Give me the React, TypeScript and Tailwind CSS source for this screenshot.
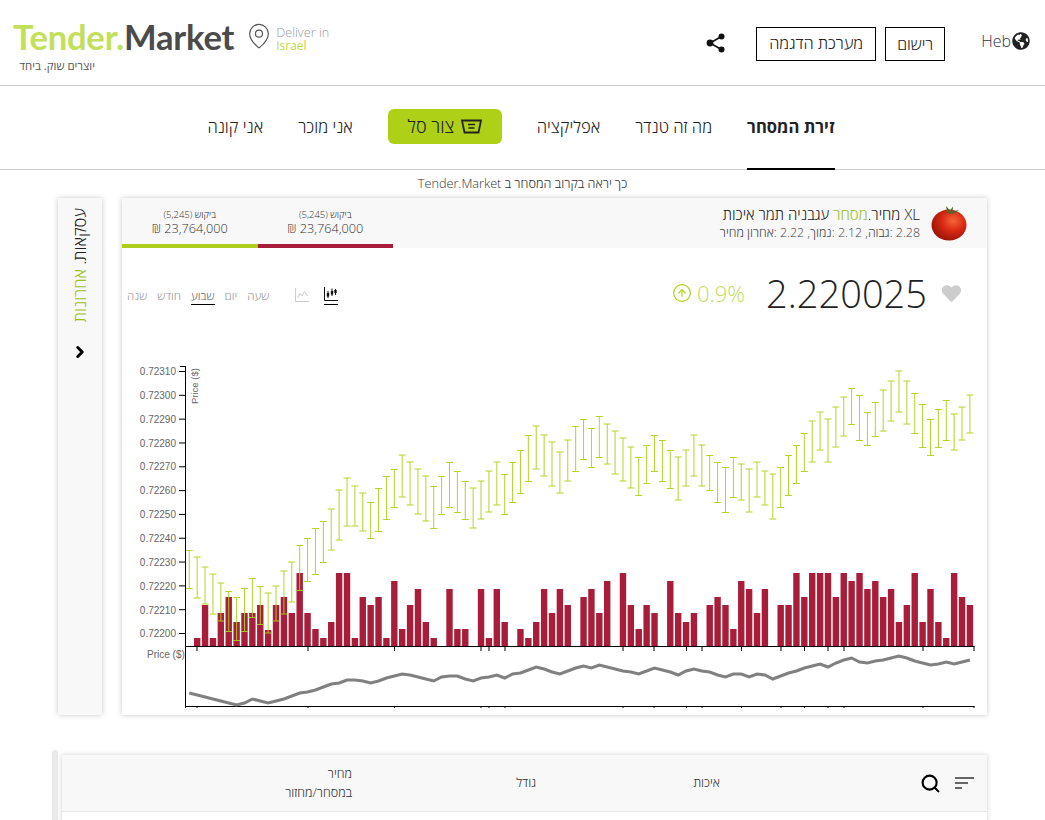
import { ChevronRight, CircleArrowUp, MapPin, Search } from "lucide-react";
import { FaGlobeAmericas, FaHeart } from "react-icons/fa";

const tops = [550,557,567,574,583,591,597,588,578,586,593,586,571,562,545,538,528,521,509,490,478,486,493,502,488,476,469,455,462,469,476,486,476,462,471,481,488,481,471,462,474,462,450,435,426,435,442,452,440,426,419,428,416,424,431,438,447,457,445,435,440,450,457,450,435,445,455,462,467,457,464,469,462,471,474,467,455,445,433,421,412,419,407,397,388,395,412,402,390,381,371,381,393,404,419,409,400,414,407,395];
const bottoms = [588,598,604,614,621,631,640,631,617,624,633,621,614,602,590,581,574,562,550,540,526,526,531,538,531,519,507,497,505,514,521,528,514,507,512,519,528,519,512,505,514,502,493,481,469,476,486,493,481,471,459,467,457,464,474,481,488,495,483,471,481,488,500,486,476,486,490,502,512,497,500,512,497,505,519,507,495,483,471,462,450,462,447,436,424,440,445,436,431,421,412,424,433,447,455,447,440,450,440,433];
const volumes = [0,638,605,638,613,597,622,613,613,605,630,605,597,613,573,613,629,638,622,573,573,638,597,605,597,638,581,629,605,589,622,638,0,589,629,629,0,589,638,589,622,0,629,638,622,589,613,589,605,0,597,589,613,581,0,573,605,629,605,613,0,581,613,622,613,0,605,597,605,629,581,589,613,589,0,605,605,573,597,573,573,573,597,573,581,573,589,581,597,589,622,605,573,622,589,622,638,573,597,605];
const line = [693,695,697,699,701,703,705,703,699,701,703,701,699,696,693,692,690,687,684,683,680,680,681,683,681,678,676,674,675,677,679,681,677,676,676,679,681,678,677,675,678,674,673,670,667,669,672,674,671,668,666,668,665,667,669,671,672,674,671,668,670,672,675,671,669,671,672,675,677,674,674,677,674,675,679,676,673,671,668,666,664,667,663,660,658,662,663,661,660,658,656,658,661,663,665,664,662,664,662,660];
const priceLabels = ["0.72310","0.72300","0.72290","0.72280","0.72270","0.72260","0.72250","0.72240","0.72230","0.72220","0.72210","0.72200"];
const xTicks = [197,308,394.5,481,489,505,623,654,686.5,702,741.5,781,804.5,828,844,923,974];

const barX = (i: number) => 189.3 + i * 7.885;

function Tomato() {
  return (
    <svg width="36" height="36" viewBox="0 0 36 36">
      <defs>
        <radialGradient id="tomatoSkin" cx="0.62" cy="0.36" r="0.72">
          <stop offset="0" stopColor="#f4663a" />
          <stop offset="0.45" stopColor="#d92a13" />
          <stop offset="1" stopColor="#8f1206" />
        </radialGradient>
      </defs>
      <ellipse cx="18" cy="20" rx="17.5" ry="15.5" fill="url(#tomatoSkin)" />
      <path d="M18 8 L12 3 L16 6.5 L15 1 L19 5.5 L22 1.5 L21.5 6.5 L28 5 L22 9 L17 8 L11 11 Z" fill="#4c6b2a" />
    </svg>
  );
}

function PriceChart() {
  return (
    <svg className="block" width="865" height="377" viewBox="122 338 865 377">
      {volumes.map((top, i) =>
        top ? <rect key={i} x={barX(i) - 3.2} y={top} width="6.4" height={646 - top} fill="#a81e3a" /> : null
      )}
      {tops.map((top, i) => {
        const x = barX(i);
        const crisp = Math.abs((x % 1) - 0.5) < 0.25;
        const off = crisp ? 0.5 : 0;
        return (
          <g key={i} stroke="#aed117" strokeWidth="1" opacity="0.92">
            <line x1={x} x2={x} y1={top + off} y2={bottoms[i] + off} />
            <line x1={x - 3.5} x2={x + 3.5} y1={top + off} y2={top + off} />
            <line x1={x - 3.5} x2={x + 3.5} y1={bottoms[i] + off} y2={bottoms[i] + off} />
          </g>
        );
      })}

      <g stroke="#000" strokeWidth="1">
        <line x1="185.5" x2="185.5" y1="366" y2="707" />
        <line x1="185" x2="974.5" y1="646.5" y2="646.5" />
        <line x1="185" x2="974.5" y1="706.5" y2="706.5" />
        {xTicks.map((x) => (
          <g key={x}>
            <line x1={x} x2={x} y1="646" y2="651" />
            <line x1={x} x2={x} y1="706" y2="708" />
          </g>
        ))}
        <line x1="185.5" x2="185.5" y1="706" y2="708" />
        <line x1="180" x2="185" y1="366.5" y2="366.5" />
        {priceLabels.map((_, i) => (
          <line key={i} x1="179" x2="185" y1={371.5 + i * 23.82} y2={371.5 + i * 23.82} />
        ))}
      </g>

      <g fill="#666" fontSize="10" fontFamily="'Liberation Sans', sans-serif">
        {priceLabels.map((label, i) => (
          <text key={label} x="176" y={375 + i * 23.85} textAnchor="end">{label}</text>
        ))}
        <text x="147" y="658">Price ($)</text>
        <text transform="translate(198 404) rotate(-90)" fontSize="9.5">Price ($)</text>
      </g>

      <polyline
        points={line.map((y, i) => `${barX(i)},${y}`).join(" ")}
        fill="none"
        stroke="#808080"
        strokeWidth="3"
      />
    </svg>
  );
}

function BookColumn({ color }: { color: string }) {
  return (
    <div className="flex h-[50px] w-[135.5px] flex-col">
      <div dir="rtl" className="flex flex-1 flex-col items-center justify-center pt-[1px] text-[#333]">
        <span className="text-[9.5px] leading-[12px]">ביקוש (5,245)</span>
        <span className="text-[12.7px] leading-[14px]">23,764,000 ₪</span>
      </div>
      <div className={`h-[4px] ${color}`} />
    </div>
  );
}

export default function App() {
  return (
    <div className="h-[820px] overflow-hidden bg-white font-['Open_Sans',sans-serif] font-light text-[#222]">
      {/* top bar */}
      <header className="flex h-[86px] items-center border-b border-[#ccc] pl-[13px] pr-[15px]">
        <div className="flex flex-col pt-[2px]">
          <div className="font-['Lato',sans-serif] text-[34.6px] font-bold leading-[44px] tracking-[-0.2px]">
            <span className="text-[#c3e05c]">Tender.</span>
            <span className="text-[#4b4b4b]">Market</span>
          </div>
          <div dir="rtl" className="w-[82px] text-[11.4px] font-normal leading-[14px] text-[#555]">
            יוצרים שוק. ביחד
          </div>
        </div>
        <MapPin size={28} strokeWidth={1} className="ml-[11px] mb-[14px] text-[#555]" />
        <div className="ml-[3px] mb-[7px] flex flex-col leading-[14px]">
          <span className="text-[12.7px] text-[#999]">Deliver in</span>
          <span className="text-[12px] font-normal text-[#bcd93a]">Israel</span>
        </div>

        <svg className="ml-auto" width="20" height="20" viewBox="0 0 20 20">
          <g stroke="#111" strokeWidth="1.6">
            <line x1="4" y1="10" x2="15.5" y2="3.5" />
            <line x1="4" y1="10" x2="15.5" y2="16.5" />
          </g>
          <circle cx="4" cy="10" r="3.4" fill="#111" />
          <circle cx="15.5" cy="3.5" r="3" fill="#111" />
          <circle cx="15.5" cy="16.5" r="3" fill="#111" />
        </svg>
        <button dir="rtl" className="ml-[30px] mt-[2px] h-[34px] w-[120px] border border-black text-[16.4px] font-light">
          מערכת הדגמה
        </button>
        <button dir="rtl" className="ml-[9px] mt-[2px] h-[34px] w-[60px] border border-black text-[16px] font-light">
          רישום
        </button>
        <div className="ml-[36px] mb-[3px] flex items-center gap-[1px]">
          <span className="text-[16px] text-[#334]">Heb</span>
          <FaGlobeAmericas size={18} className="text-[#222]" />
        </div>
      </header>

      {/* main nav */}
      <nav dir="rtl" className="flex h-[84px] justify-center gap-[35px] border-b border-[#ccc] pr-[3px] text-[16.6px]">
        <a className="-mb-px flex items-center border-b-2 border-black font-bold text-[#222]">זירת המסחר</a>
        <a className="flex items-center">מה זה טנדר</a>
        <a className="flex items-center">אפליקציה</a>
        <div className="flex items-center">
          <button className="mb-[2px] flex h-[35px] w-[114px] items-center justify-center gap-[7px] rounded-[6px] bg-[#aed117] text-[18px] font-light text-[#222]">
            <svg width="21" height="15" viewBox="0 0 21 15" fill="none" stroke="#222">
              <path d="M1 1.5 H20 L17.5 13.5 H3.5 Z" strokeWidth="1.8" />
              <path d="M7 5.5 H14 M7.5 9 H13.5" strokeWidth="1.4" />
            </svg>
            צור סל
          </button>
        </div>
        <a className="flex items-center">אני מוכר</a>
        <a className="flex items-center">אני קונה</a>
      </nav>

      <p dir="rtl" className="flex h-[28px] items-center justify-center text-[12.7px] text-[#333]">
        כך יראה בקרוב המסחר ב Tender.Market
      </p>

      {/* chart row */}
      <section className="ml-[58px] flex gap-[20px]">
        <aside className="flex h-[517px] w-[44px] flex-col items-center bg-[#f8f8f8] pt-[10px] shadow-[0_0_5px_rgba(0,0,0,0.22)]">
          <div dir="rtl" className="rotate-180 text-[16.6px] leading-[44px] [writing-mode:vertical-rl]">
            עסקאות. <span className="text-[#9dbe1d]">אחרונות</span>
          </div>
          <ChevronRight size={18} strokeWidth={4} className="mt-[21px] text-black" />
        </aside>

        <div className="h-[517px] w-[865px] bg-white shadow-[0_0_5px_rgba(0,0,0,0.22)]">
          <div className="flex h-[50px] bg-[#f8f8f8]">
            <BookColumn color="bg-[#aecd1c]" />
            <BookColumn color="bg-[#a81e3a]" />
            <div dir="rtl" className="ml-auto flex items-center gap-[11px] pr-[20px]">
              <Tomato />
              <div className="flex flex-col items-start">
                <span className="text-[15px] leading-[20px]">
                  XL מחיר.<span className="text-[#9dbe1d]">מסחר</span> עגבניה תמר איכות
                </span>
                <span className="text-[12.4px] leading-[18px] text-[#444]">
                  2.28 :גבוה, 2.12 :נמוך, 2.22 :אחרון מחיר
                </span>
              </div>
            </div>
          </div>

          <div className="flex h-[90px] items-center pl-[5px] pr-[26px]">
            <div dir="rtl" className="mt-[5px] flex items-start gap-[10px] text-[11.7px] leading-[18px] text-[#999]">
              <span className="border-b border-transparent">שעה</span>
              <span className="border-b border-transparent">יום</span>
              <span className="border-b border-black text-[#666]">שבוע</span>
              <span className="border-b border-transparent">חודש</span>
              <span className="border-b border-transparent">שנה</span>
            </div>
            <svg className="ml-[26px] mt-[3px]" width="14" height="14" viewBox="0 0 14 14" fill="none" stroke="#ccc">
              <path d="M0.5 0 V13.5 H14" />
              <path d="M2.5 10 L5 5.5 L7 8 L9.5 3.5 L12.5 8" />
            </svg>
            <div className="ml-[15px] mt-[6px] border-b border-black pb-[3px]">
              <svg className="block" width="14" height="14" viewBox="0 0 14 14" fill="none" stroke="#111">
                <path d="M0.5 0 V13.5 H14" />
                <path d="M4 4 V11 M8 1.5 V9 M11.5 2 V8" strokeWidth="1" />
                <path d="M4 6 V9.5 M8 4 V7.5 M11.5 3 V6" strokeWidth="2.4" />
              </svg>
            </div>

            <CircleArrowUp size={20} strokeWidth={1.4} className="ml-auto text-[#aed117]" />
            <span className="ml-[5px] text-[22px] text-[#c3dd5b]">0.9%</span>
            <span className="ml-[21px] text-[38px] leading-none text-[#222]">2.220025</span>
            <FaHeart size={19} className="ml-[15px] text-[#ccc]" />
          </div>

          <PriceChart />
        </div>
      </section>

      {/* listings table */}
      <section className="mt-[35px] flex pl-[52px]">
        <div className="h-[85px] w-[6px] rounded-t-[4px] bg-[#e9e9e9]" />
        <div className="ml-[4px] mt-[5px] h-[100px] w-[925px] bg-white shadow-[0_0_5px_rgba(0,0,0,0.2)]">
          <div className="flex h-[57px] items-center border-b border-[#e5e5e5] bg-[#f8f8f8] pr-[13px] text-[12.5px] text-[#333]">
            <div dir="rtl" className="w-[290px] leading-[19px]">
              <div>מחיר</div>
              <div>במסחר/מחזור</div>
            </div>
            <div dir="rtl" className="w-[184px]">גודל</div>
            <div dir="rtl" className="w-[184px]">איכות</div>
            <Search size={21} strokeWidth={2.4} className="ml-auto text-black" />
            <svg className="ml-[14px]" width="19" height="13" viewBox="0 0 19 13" fill="#666">
              <rect width="19" height="2" />
              <rect y="5" width="13" height="2" />
              <rect y="10" width="7" height="2" />
            </svg>
          </div>
        </div>
      </section>
    </div>
  );
}
